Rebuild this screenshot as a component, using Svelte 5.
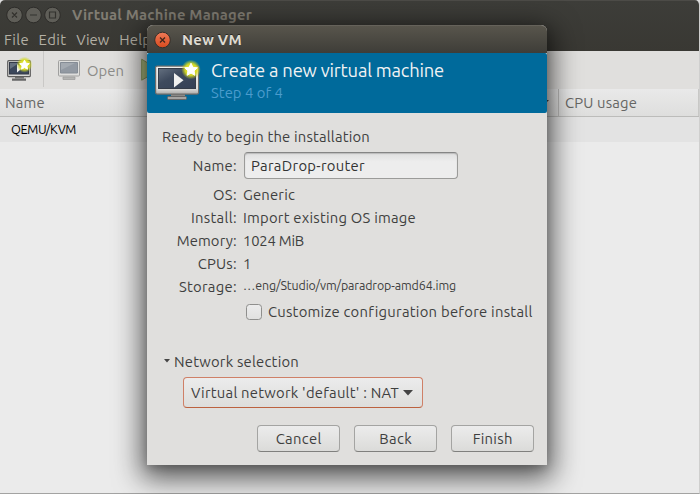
<script>
  const rows = [
    { label: 'OS:', lw: 24, value: 'Generic', vw: 52 },
    { label: 'Install:', lw: 46, value: 'Import existing OS image', vw: 173 },
    { label: 'Memory:', lw: 60, value: '1024 MiB', vw: 61 },
    { label: 'CPUs:', lw: 39, value: '1', vw: 8 },
    { label: 'Storage:', lw: 58, value: '…eng/Studio/vm/paradrop-amd64.img', vw: 213, small: true }
  ];
  const menus = [['File', 25], ['Edit', 28], ['View', 33], ['Help', 32]];
  const buttons = [['Cancel', 46], ['Back', 33], ['Finish', 40]];

  // Tracks a label out or in so that it occupies the given width.
  function fit(node, width) {
    const natural = node.getBoundingClientRect().width;
    const gap = (width - natural) / node.textContent.length;
    node.style.letterSpacing = gap + 'px';
    node.style.marginRight = -gap + 'px';
  }
</script>

<div class="desktop">
  <main class="manager">
    <header class="chrome">
      <div class="titlebar">
        <svg width="56" height="18" viewBox="0 0 56 18" aria-hidden="true">
          <g fill="#5f5e58" stroke="#2e2d2a"><circle cx="9.5" cy="9" r="7.8" /><circle cx="28.5" cy="9" r="7.8" /><circle cx="47.5" cy="9" r="7.8" /></g>
          <path d="m7 6.5 5 5m0-5-5 5M25 9h7M44.5 6h6v6h-6z" fill="none" stroke="#33322e" stroke-width="1.2" />
        </svg>
        <b><span use:fit={180}>Virtual Machine Manager</span></b>
      </div>
      <nav>
        {#each menus as [name, width]}<span class="menu"><span use:fit={width}>{name}</span></span>{/each}
      </nav>
    </header>
    <div class="toolbar">
      <div class="new">
        <svg width="26" height="25" viewBox="0 0 26 25" aria-hidden="true">
          <path d="M9 20h9v1.5H9z" fill="#777" /><path d="M6 21.5h14v2.2H6z" fill="#666" />
          <rect x="1.7" y="3.7" width="22.6" height="16" rx="1" fill="#d8d8d6" stroke="#5d5d5c" stroke-width="1.2" />
          <rect x="3.5" y="5.5" width="19" height="11.5" fill="#3b475b" stroke="#343b48" />
          <path d="M4 6h9l-9 6z" fill="#66717f" />
          <path d="M11 7v8.5l5-4.2z" fill="#f0f0ef" />
          <circle cx="18.5" cy="7.7" r="8" fill="url(#glow)" />
          <path d="m18.5 3.2 1.5 3 3.3.4-2.4 2.3.6 3.3-3-1.6-3 1.6.6-3.3-2.4-2.3 3.3-.4z" fill="#fff" stroke="#fff" stroke-linejoin="round" />
        </svg>
      </div>
      <div class="open">
        <svg width="24" height="22" viewBox="0 0 24 22" aria-hidden="true">
          <path d="M6 18h12v2.5H6z" fill="#b5b5b3" stroke="#999" stroke-width=".7" />
          <rect x="1.5" y="1.5" width="21" height="15.5" rx="1" fill="#dededc" stroke="#a0a09f" />
          <path d="M3.5 3.5h17v10.5h-17z" fill="#9299a2" stroke="#858c95" /><path d="M4 4h14L4 11z" fill="#a4aab1" />
        </svg>
        <span use:fit={37}>Open</span>
      </div>
      <svg class="run" width="19" height="24" viewBox="0 0 19 24" aria-hidden="true"><path d="M.7 1.2v21L18 12z" fill="#b3c486" stroke="#8b9c60" /></svg>
    </div>
    <div class="columns">
      <div class="name">
        <span use:fit={40}>Name</span>
        <svg width="10" height="5" viewBox="0 0 10 5" aria-hidden="true"><path d="M0 0h10L5 5z" fill="#444" /></svg>
      </div>
      <div class="cpu"><span use:fit={72}>CPU usage</span></div>
    </div>
    <div class="connection"><span use:fit={65}>QEMU/KVM</span></div>
  </main>

  <section class="dialog">
    <div class="caption">
      <svg width="18" height="18" viewBox="0 0 18 18" aria-hidden="true">
        <defs><linearGradient id="close" x1="0" y1="0" x2="0" y2="1"><stop stop-color="#ee7a58" /><stop offset="1" stop-color="#d84a1d" /></linearGradient></defs>
        <circle cx="9.5" cy="9" r="7.8" fill="url(#close)" stroke="#33302b" />
        <path d="m7 6.5 5 5m0-5-5 5" stroke="#40261b" stroke-width="1.3" />
      </svg>
      <b><span use:fit={60}>New VM</span></b>
    </div>
    <div class="banner">
      <svg width="48" height="44" viewBox="0 0 48 44" aria-hidden="true">
        <defs>
          <linearGradient id="frame" x1="0" y1="0" x2="0" y2="1">
            <stop offset="0" stop-color="#f0f0ee" /><stop offset=".8" stop-color="#dededc" /><stop offset="1" stop-color="#aaa9a7" />
          </linearGradient>
          <linearGradient id="screen" x1="0" y1="0" x2="1" y2="1">
            <stop offset="0" stop-color="#647080" /><stop offset=".4" stop-color="#3e4a5d" /><stop offset="1" stop-color="#354055" />
          </linearGradient>
          <radialGradient id="glow">
            <stop offset="0" stop-color="#f4f23a" /><stop offset=".6" stop-color="#d9dd20" stop-opacity=".95" /><stop offset="1" stop-color="#c9d42a" stop-opacity="0" />
          </radialGradient>
        </defs>
        <path d="M18 36h14v2h-14z" fill="#898987" />
        <rect x="14.5" y="38.5" width="19" height="3" rx="1" fill="#a5a4a2" stroke="#666" />
        <rect x="2.6" y="8.1" width="43" height="28" rx="1.5" fill="url(#frame)" stroke="#6d6c6b" stroke-width="1.2" />
        <rect x="5.5" y="10.5" width="37" height="20" fill="url(#screen)" stroke="#353c48" />
        <path d="M21 15v14.5l9.5-7.2z" fill="#f0f0ef" />
        <circle cx="38" cy="11.5" r="9.8" fill="url(#glow)" />
        <path d="m38 5.2 1.9 4.1 4.4.5-3.2 3.1.8 4.4-3.9-2.2-3.9 2.2.8-4.4-3.2-3.1 4.4-.5z" fill="#fff" stroke="#fff" stroke-linejoin="round" />
      </svg>
      <div class="heading">
        <div class="big"><span use:fit={233}>Create a new virtual machine</span></div>
        <div class="step"><span use:fit={72}>Step 4 of 4</span></div>
      </div>
    </div>
    <div class="body">
      <div class="line"><span use:fit={208}>Ready to begin the installation</span></div>
      <div class="row name-row">
        <div class="label"><span use:fit={44}>Name:</span></div>
        <div class="entry"><span use:fit={114}>ParaDrop-router</span></div>
      </div>
      {#each rows as row}
        <div class="row">
          <div class="label"><span use:fit={row.lw}>{row.label}</span></div>
          <div class="value" class:small={row.small}><span use:fit={row.vw}>{row.value}</span></div>
        </div>
      {/each}
      <div class="customize">
        <i class="box"></i><span use:fit={264}>Customize configuration before install</span>
      </div>
      <div class="expander">
        <svg width="6" height="4" viewBox="0 0 6 4" aria-hidden="true"><path d="M0 0h6L3 3.5z" fill="#454545" /></svg>
        <span use:fit={125}>Network selection</span>
      </div>
      <div class="combo">
        <span use:fit={208}>Virtual network 'default' : NAT</span>
        <svg width="10" height="6" viewBox="0 0 10 6" aria-hidden="true"><path d="M0 0h10L5 5.5z" fill="#444" /></svg>
      </div>
      <div class="actions">
        {#each buttons as [name, width]}<div class="button"><span use:fit={width}>{name}</span></div>{/each}
      </div>
    </div>
  </section>
</div>

<style>
  .desktop { position: relative; width: 700px; height: 494px; overflow: hidden; background: #ddd; font: 14.8px/23px Ubuntu, 'Noto Sans', sans-serif; color: #3f3f3f; }
  .desktop * { box-sizing: border-box; }
  svg { display: block; flex: none; }
  span { white-space: pre; display: inline-block; }
  .manager { height: 494px; background: #ebebeb; border-right: 1px solid #cfcfce; border-bottom: 1px solid #a3a3a2; border-radius: 5px 5px 0 0; overflow: hidden; }
  .chrome { height: 51px; width: 700px; background: linear-gradient(#3d3d39, #393833); border-top: 1px solid #4c4b47; }
  .titlebar { height: 27px; display: flex; align-items: center; padding-left: 5px; gap: 11px; color: #817d73; }
  nav { display: flex; padding-left: 4px; gap: 10px; color: #b4b0a5; }
  .toolbar { height: 38px; display: flex; background: #e0dfdd; color: #8c8c89; }
  .new { width: 44px; height: 36px; padding: 6px 0 0 6px; border-right: 1px solid #c9c8c6; }
  .open { width: 97px; padding: 0 0 0 13px; display: flex; align-items: center; gap: 6px; }
  .run { margin-top: 7px; }
  .columns { height: 28px; display: flex; background: linear-gradient(#e9e9e9, #dededd); border-bottom: 1px solid #bcbcba; color: #666664; line-height: 27px; }
  .name { width: 559px; padding: 0 9px 0 5px; display: flex; align-items: center; justify-content: space-between; border-right: 1px solid #bebdbb; }
  .cpu { flex: 1; padding-left: 6px; border-right: 1px solid #c8c8c6; }
  .connection { height: 25px; padding-left: 11px; background: #e3e3e3; color: #000; font-size: 12.7px; line-height: 25px; }
  .dialog { position: absolute; left: 147px; top: 25px; width: 400px; height: 440px; background: #e0dfdd; border-radius: 6px 6px 0 0; box-shadow: 0 8px 28px 5px rgba(0, 0, 0, .65), 0 3px 8px rgba(0, 0, 0, .15); }
  .caption { height: 28px; display: flex; align-items: center; padding-left: 6px; gap: 11px; color: #dfdbd2; border-radius: 6px 6px 0 0; background: linear-gradient(#58554c, #3e3d38); border-top: 1px solid #65625a; text-shadow: 0 -1px #292824; }
  .banner { height: 60px; display: flex; padding: 5px 0 0 6px; gap: 10px; background: #006a9b; border-radius: 2px; color: #f1f3f4; }
  .heading { padding-top: 1px; }
  .big { font-size: 18.4px; height: 22px; line-height: 22px; }
  .step { color: #4b9ccd; }
  .body { padding: 12px 13px 13px 15px; display: flex; flex-direction: column; }
  .line { height: 27px; }
  .row { display: flex; gap: 6px; height: 23px; }
  .label { width: 75px; padding-right: .4px; text-align: right; }
  .name-row { height: 31px; line-height: 27px; }
  .entry { width: 214px; height: 27px; margin-left: 1px; padding-left: 6px; line-height: 25px; border: 1px solid #9b9b99; border-top-color: #858585; border-radius: 4px; background: linear-gradient(#dfdfdf, #ededed 35%); box-shadow: inset 0 1px 1px #bbb; color: #333; }
  .small { font-size: 12.4px; line-height: 20px; }
  .customize { display: flex; align-items: center; gap: 6px; padding-left: 84px; margin-top: 2px; height: 23px; }
  .box { width: 16px; height: 16px; border: 1px solid #8f8f8d; border-radius: 3.5px; background: linear-gradient(#ececec, #e1e1e0); }
  .expander { display: flex; align-items: center; gap: 4px; padding-left: 2px; margin-top: 27px; height: 23px; }
  .expander svg { margin-bottom: 2px; }
  .combo { width: 240px; height: 31px; margin: 4px 0 0 21px; padding-left: 7px; display: flex; align-items: center; gap: 4px; border: 1px solid #cf8067; border-bottom-color: #bc623f; border-radius: 4px; background: linear-gradient(#ececec, #dddddb); }
  .actions { display: flex; justify-content: flex-end; gap: 14px; margin-top: 17px; }
  .button { width: 83px; height: 27px; line-height: 25px; text-align: center; border: 1px solid #a4a4a2; border-bottom-color: #80807e; border-radius: 4px; background: linear-gradient(#ececec, #dbdbd9); }
</style>
